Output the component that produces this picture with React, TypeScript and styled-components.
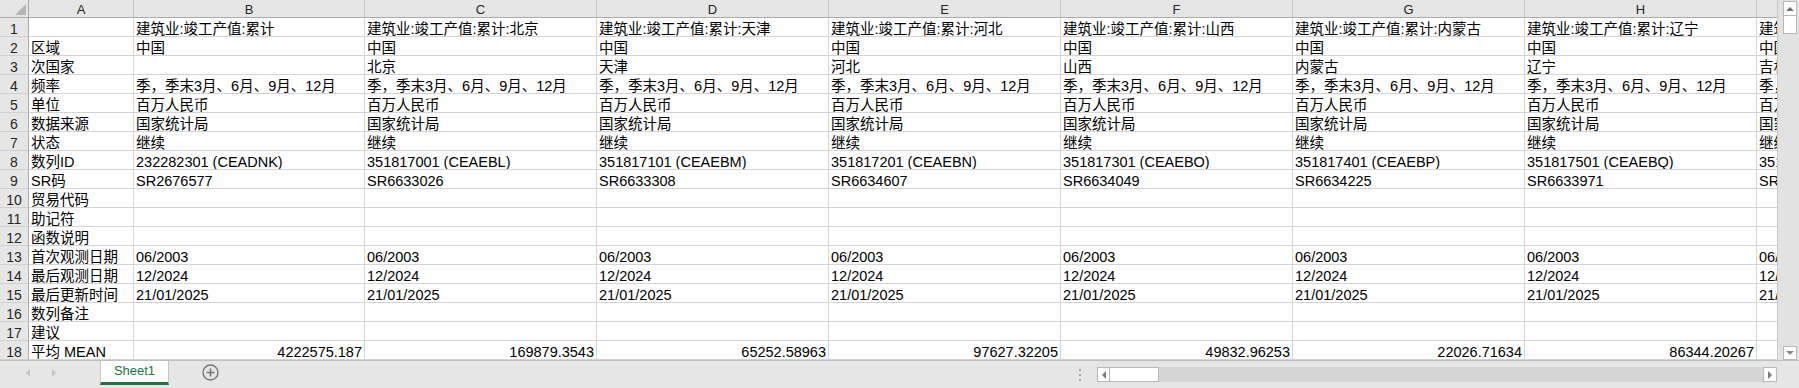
import React from 'react'
import styled, { createGlobalStyle } from 'styled-components'

const GlobalStyle = createGlobalStyle`
  body {
    margin: 0;
    background: #fff;
  }
`

const Frame = styled.div`
  width: 1799px;
  height: 388px;
  display: flex;
  flex-direction: column;
  overflow: hidden;
  background: #e6e6e6;
  font-family: 'Liberation Sans', 'Noto Sans CJK SC', sans-serif;
`

const Main = styled.div`
  display: flex;
  height: 360px;
`

const GridArea = styled.div`
  flex: 1;
  overflow: hidden;
  background: #fff;
`

const Grid = styled.div`
  display: grid;
  grid-template-columns: 29px 105px 231px repeat(7, 232px);
  grid-template-rows: 18px repeat(18, 19px);
`

const Corner = styled.div`
  position: relative;
  background: #e6e6e6;
  border-right: 1px solid #ababab;
  border-bottom: 1px solid #ababab;
  svg {
    position: absolute;
    left: 15px;
    top: 4px;
  }
`

const ColHeader = styled.div`
  box-sizing: border-box;
  background: #e6e6e6;
  border-right: 1px solid #c6c6c6;
  border-bottom: 1px solid #ababab;
  text-align: center;
  font-size: 13px;
  line-height: 15px;
  padding-top: 2px;
  color: #262626;
  white-space: nowrap;
  overflow: hidden;
`

const RowHeader = styled.div`
  box-sizing: border-box;
  background: #e6e6e6;
  border-right: 1px solid #ababab;
  border-bottom: 1px solid #d0d0d0;
  text-align: center;
  font-size: 14px;
  line-height: 16px;
  padding-top: 3px;
  color: #262626;
`

const Cell = styled.div<{ $align?: 'left' | 'right' }>`
  box-sizing: border-box;
  border-right: 1px solid #d4d4d4;
  border-bottom: 1px solid #d4d4d4;
  padding: 3px 2px 0 2px;
  font-size: 14.5px;
  line-height: 16px;
  color: #000;
  white-space: nowrap;
  overflow: hidden;
  text-align: ${(p) => p.$align ?? 'left'};
`

const VScroll = styled.div`
  box-sizing: border-box;
  width: 22px;
  border-left: 1px solid #c8c8c8;
  background: #e2e2e2;
  display: flex;
  flex-direction: column;
  align-items: center;
  padding: 1px 0 0 3px;
`

const ScrollButton = styled.div<{ $w: number; $h: number }>`
  box-sizing: border-box;
  width: ${(p) => p.$w}px;
  height: ${(p) => p.$h}px;
  background: #fff;
  border: 1px solid #b9b9b9;
  display: flex;
  align-items: center;
  justify-content: center;
  flex-shrink: 0;
`

const Spacer = styled.div`
  flex: 1;
`

const BottomBar = styled.div`
  box-sizing: border-box;
  height: 28px;
  border-top: 1px solid #bfbfbf;
  display: flex;
  align-items: flex-start;
  background: #e6e6e6;
`

const SheetNav = styled.div`
  width: 100px;
  height: 24px;
  display: flex;
  align-items: center;
  gap: 22px;
  padding-left: 26px;
  box-sizing: border-box;
`

const Tab = styled.div`
  box-sizing: border-box;
  width: 69px;
  height: 24px;
  background: #fff;
  border-left: 1px solid #c6c6c6;
  border-right: 1px solid #c6c6c6;
  border-bottom: 3px solid #217346;
  color: #217346;
  font-size: 13px;
  line-height: 20px;
  text-align: center;
`

const AddButton = styled.div`
  margin-left: 33px;
  margin-top: 3px;
  display: flex;
`

const Dots = styled.div`
  display: flex;
  flex-direction: column;
  gap: 3px;
  margin-top: 8px;
  margin-right: 16px;
  span {
    width: 2px;
    height: 2px;
    background: #a6a6a6;
  }
`

const HScroll = styled.div`
  width: 680px;
  height: 15px;
  margin-top: 6px;
  display: flex;
  background: #d6d6d6;
`

const Thumb = styled.div`
  box-sizing: border-box;
  width: 49px;
  height: 15px;
  background: #fff;
  border: 1px solid #b9b9b9;
  border-left: none;
`

const EndGap = styled.div`
  width: 22px;
`

const labels = [
  '',
  '区域',
  '次国家',
  '频率',
  '单位',
  '数据来源',
  '状态',
  '数列ID',
  'SR码',
  '贸易代码',
  '助记符',
  '函数说明',
  '首次观测日期',
  '最后观测日期',
  '最后更新时间',
  '数列备注',
  '建议',
  '平均 MEAN',
]

const regions = ['', '北京', '天津', '河北', '山西', '内蒙古', '辽宁', '吉林']
const ids = [
  '232282301 (CEADNK)',
  '351817001 (CEAEBL)',
  '351817101 (CEAEBM)',
  '351817201 (CEAEBN)',
  '351817301 (CEAEBO)',
  '351817401 (CEAEBP)',
  '351817501 (CEAEBQ)',
  '351817601 (CEAEBR)',
]
const srs = [
  'SR2676577',
  'SR6633026',
  'SR6633308',
  'SR6634607',
  'SR6634049',
  'SR6634225',
  'SR6633971',
  'SR6634418',
]
const means = [
  '4222575.187',
  '169879.3543',
  '65252.58963',
  '97627.32205',
  '49832.96253',
  '22026.71634',
  '86344.20267',
  '',
]

const letters = ['A', 'B', 'C', 'D', 'E', 'F', 'G', 'H', 'I']

// one column of values per series, top to bottom
function series(i: number) {
  const r = regions[i]
  return [
    r ? `建筑业:竣工产值:累计:${r}` : '建筑业:竣工产值:累计',
    '中国',
    r,
    '季，季末3月、6月、9月、12月',
    '百万人民币',
    '国家统计局',
    '继续',
    ids[i],
    srs[i],
    '',
    '',
    '',
    '06/2003',
    '12/2024',
    '21/01/2025',
    '',
    '',
    means[i],
  ]
}

const Triangle = ({ dir, color }: { dir: 'left' | 'right' | 'up' | 'down'; color: string }) => {
  const pts = {
    left: '4,0 4,8 0,4',
    right: '0,0 0,8 4,4',
    up: '0,4 8,4 4,0',
    down: '0,0 8,0 4,4',
  }[dir]
  const w = dir === 'left' || dir === 'right' ? 4 : 8
  const h = dir === 'left' || dir === 'right' ? 8 : 4
  return (
    <svg width={w} height={h} viewBox={`0 0 ${w} ${h}`}>
      <polygon points={pts} fill={color} />
    </svg>
  )
}

function App() {
  const cols = regions.map((_, i) => series(i))

  return (
    <Frame>
      <GlobalStyle />
      <Main>
        <GridArea>
          <Grid>
            <Corner>
              <svg width="11" height="11" viewBox="0 0 11 11">
                <polygon points="11,0 11,11 0,11" fill="#b5b5b5" />
              </svg>
            </Corner>
            {letters.map((l) => (
              <ColHeader key={l}>{l}</ColHeader>
            ))}
            {labels.map((label, row) => (
              <React.Fragment key={row}>
                <RowHeader>{row + 1}</RowHeader>
                <Cell>{label}</Cell>
                {cols.map((c, i) => (
                  <Cell key={i} $align={row === 17 ? 'right' : 'left'}>
                    {c[row]}
                  </Cell>
                ))}
              </React.Fragment>
            ))}
          </Grid>
        </GridArea>
        <VScroll>
          <ScrollButton $w={14} $h={15}>
            <Triangle dir="up" color="#6d6d6d" />
          </ScrollButton>
          <ScrollButton $w={14} $h={18} style={{ borderTop: 'none' }} />
          <Spacer />
          <ScrollButton $w={14} $h={14}>
            <Triangle dir="down" color="#8a8a8a" />
          </ScrollButton>
        </VScroll>
      </Main>
      <BottomBar>
        <SheetNav>
          <Triangle dir="left" color="#c4c4c4" />
          <Triangle dir="right" color="#c4c4c4" />
        </SheetNav>
        <Tab>Sheet1</Tab>
        <AddButton>
          <svg width="17" height="17" viewBox="0 0 17 17">
            <circle cx="8.5" cy="8.5" r="7.5" fill="none" stroke="#777" strokeWidth="1.4" />
            <path d="M8.5 4.5v8M4.5 8.5h8" stroke="#777" strokeWidth="1.6" />
          </svg>
        </AddButton>
        <Spacer />
        <Dots>
          <span />
          <span />
          <span />
        </Dots>
        <HScroll>
          <ScrollButton $w={13} $h={15}>
            <Triangle dir="left" color="#7a7a7a" />
          </ScrollButton>
          <Thumb />
          <Spacer />
          <ScrollButton $w={14} $h={15}>
            <Triangle dir="right" color="#7a7a7a" />
          </ScrollButton>
        </HScroll>
        <EndGap />
      </BottomBar>
    </Frame>
  )
}

export default App
